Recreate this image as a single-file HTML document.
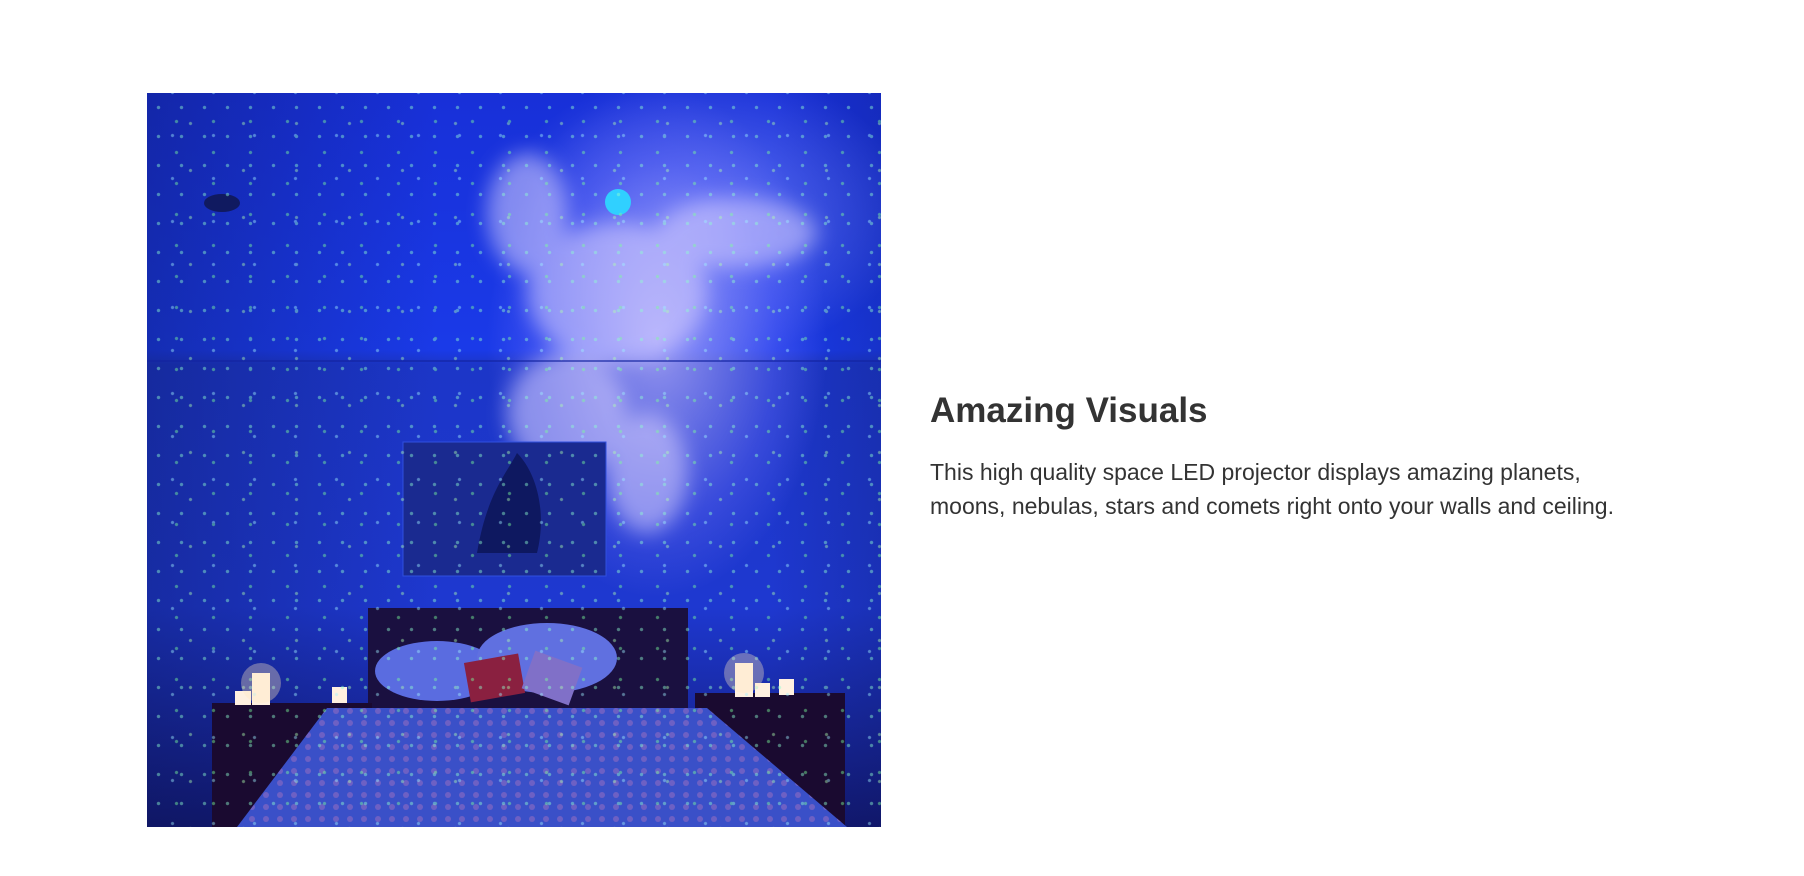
<!DOCTYPE html>
<html><head><style>
html,body{margin:0;padding:0;background:#fff;width:1804px;height:876px;overflow:hidden}
.img{position:absolute;left:147px;top:93px;width:734px;height:734px;overflow:hidden;
background:
radial-gradient(ellipse 200px 300px at 510px 250px,rgba(200,190,255,.7),rgba(120,120,255,.3) 60%,transparent 85%),
radial-gradient(ellipse 260px 180px at 560px 120px,rgba(150,160,255,.55),transparent 80%),
linear-gradient(90deg,rgba(10,20,80,.35),transparent 40%,transparent 85%,rgba(10,20,80,.2)),
linear-gradient(180deg,#1830d8 0%,#1a3ae8 35%,#1c36c8 37%,#1e38d0 70%,#121870 100%);}
.stars{position:absolute;inset:0;
background:
radial-gradient(circle,#8fffd0 1.4px,transparent 2px) 0 0/23px 29px,
radial-gradient(circle,#7cff9c 1.3px,transparent 2px) 11px 13px/37px 31px,
radial-gradient(circle,#9ff0ff 1.2px,transparent 2px) 5px 21px/41px 43px,
radial-gradient(circle,#b0ffb0 1.2px,transparent 2px) 17px 7px/53px 47px;opacity:.45}
.h{position:absolute;left:930px;top:391px;font:bold 35px "Liberation Sans",sans-serif;color:#333;margin:0}
.p{position:absolute;left:930px;top:455px;font:23px/34px "Liberation Sans",sans-serif;color:#333;margin:0;width:800px}
</style></head><body>
<div class="img">
<svg width="734" height="734" viewBox="0 0 734 734" style="position:absolute;left:0;top:0">
<defs><filter id="b"><feGaussianBlur stdDeviation="10"/></filter>
<pattern id="d" width="14" height="12" patternUnits="userSpaceOnUse"><circle cx="7" cy="6" r="3" fill="#a070c0"/></pattern></defs>
<g filter="url(#b)" fill="#d8d0ff" opacity=".55">
<ellipse cx="470" cy="200" rx="90" ry="70"/><ellipse cx="420" cy="320" rx="60" ry="60"/><ellipse cx="500" cy="380" rx="40" ry="60"/><ellipse cx="590" cy="140" rx="80" ry="35"/><ellipse cx="380" cy="120" rx="40" ry="60"/>
</g>
<line x1="0" y1="268" x2="734" y2="268" stroke="#1424a0" stroke-width="2" opacity=".6"/>
<ellipse cx="75" cy="110" rx="18" ry="9" fill="#101a60"/>
<circle cx="471" cy="109" r="13" fill="#30d0ff"/>
<rect x="256" y="349" width="203" height="134" fill="#1a2a90" stroke="#3050e0"/>
<path d="M330 460 C340 400 360 380 370 360 C390 380 400 420 390 460 Z" fill="#0e1860"/>
<rect x="221" y="515" width="320" height="100" fill="#1a1040"/>
<rect x="65" y="610" width="160" height="124" fill="#1a0a30"/>
<rect x="548" y="600" width="150" height="134" fill="#1a0a30"/>
<path d="M180 615 L560 615 L700 734 L90 734 Z" fill="#3a50c8"/>
<path d="M180 615 L560 615 L700 734 L90 734 Z" fill="url(#d)" opacity=".5"/>
<ellipse cx="290" cy="578" rx="62" ry="30" fill="#5a6ce0"/>
<ellipse cx="400" cy="565" rx="70" ry="35" fill="#6070e0"/>
<rect x="320" y="565" width="55" height="40" fill="#8a2040" transform="rotate(-10 347 585)"/>
<rect x="380" y="565" width="50" height="40" fill="#8070c8" transform="rotate(20 405 585)"/>
<g fill="#fff0e0"><rect x="105" y="580" width="18" height="32"/><rect x="88" y="598" width="16" height="14"/><rect x="185" y="594" width="15" height="16"/>
<rect x="588" y="570" width="18" height="34"/><rect x="608" y="590" width="15" height="14"/><rect x="632" y="586" width="15" height="16"/></g>
</svg>
<div class="stars"></div>
<svg width="734" height="734" style="position:absolute;left:0;top:0"><g fill="#ffe8c0" opacity=".35"><circle cx="114" cy="590" r="20"/><circle cx="597" cy="580" r="20"/></g></svg>
</div>
<h2 class="h">Amazing Visuals</h2>
<p class="p">This high quality space LED projector displays amazing planets,<br>moons, nebulas, stars and comets right onto your walls and ceiling.</p>
</body></html>
